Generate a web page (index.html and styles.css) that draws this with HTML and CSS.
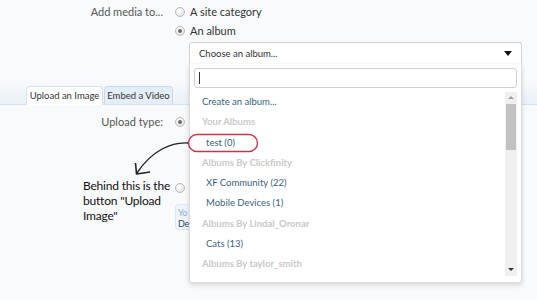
FILE: index.html
```html
<!DOCTYPE html>
<html>
<head>
<meta charset="utf-8">
<link rel="stylesheet" href="styles.css">
</head>
<body>
<div class="page">
  <div class="row">
    <div class="label">Add media to...</div>
    <div class="controls">
      <div class="opt"><span class="radio"></span><span>A site category</span></div>
      <div class="opt"><span class="radio checked"></span><span>An album</span></div>
      <div class="select">
        <div class="select-box"><span>Choose an album...</span><span class="caret"></span></div>
        <div class="dropdown">
          <div class="search"><span class="cursor"></span></div>
          <div class="listwrap">
            <ul class="list">
              <li class="item">Create an album...</li>
              <li class="head">Your Albums</li>
              <li class="item sub">test (0)</li>
              <li class="head">Albums By Clickfinity</li>
              <li class="item sub">XF Community (22)</li>
              <li class="item sub">Mobile Devices (1)</li>
              <li class="head">Albums By Lindal_Oronar</li>
              <li class="item sub">Cats (13)</li>
              <li class="head">Albums By taylor_smith</li>
            </ul>
            <div class="scrollbar">
              <span class="up"></span>
              <span class="thumb"></span>
              <span class="down"></span>
            </div>
          </div>
        </div>
      </div>
    </div>
  </div>

  <div class="tabs">
    <span class="tab active">Upload an Image</span>
    <span class="tab">Embed a Video</span>
  </div>

  <div class="row row2">
    <div class="label">Upload type:</div>
    <div class="controls">
      <div class="opt"><span class="radio checked"></span></div>
      <div class="spacer"></div>
      <div class="opt"><span class="radio"></span></div>
      <div class="info"><span class="info-a">Yo</span><span class="info-b">De</span></div>
    </div>
  </div>

  <div class="note">Behind this is the<br>button "Upload<br>Image"</div>
  <svg class="marks" width="537" height="300" viewBox="0 0 537 300">
    <rect x="188.5" y="134.5" width="69" height="17" rx="8.5" fill="none" stroke="#c5364f" stroke-width="1.4"/>
    <path d="M188 143 C172 142 152 150 137 173" fill="none" stroke="#222" stroke-width="1.4"/>
    <path d="M135.5 163 L136.5 174 L150 172" fill="none" stroke="#222" stroke-width="1.6" stroke-linejoin="round"/>
  </svg>
</div>
</body>
</html>
```

FILE: styles.css
```css
* { box-sizing: border-box; }
html, body { margin: 0; padding: 0; }
body {
  background: #f9fafc;
  font-family: Lato, "Open Sans", sans-serif;
  font-size: 11px;
  color: #333;
  width: 537px;
  height: 300px;
  overflow: hidden;
}
.page {
  position: relative;
  padding-top: 2px;
  height: 300px;
}
.row {
  display: grid;
  grid-template-columns: 163px 1fr;
  column-gap: 12px;
}
.label {
  text-align: right;
  color: #555;
  line-height: 19px;
}
.controls {
  display: flex;
  flex-direction: column;
}
.opt {
  display: flex;
  align-items: center;
  gap: 5px;
  height: 19px;
  color: #333;
}
.radio {
  width: 10px;
  height: 10px;
  border-radius: 50%;
  border: 1px solid #b9b9b9;
  background: radial-gradient(circle at 40% 35%, #ffffff, #dcdcdc);
  position: relative;
  flex: none;
}
.radio.checked::after {
  content: "";
  position: absolute;
  left: 2px;
  top: 2px;
  width: 4px;
  height: 4px;
  border-radius: 50%;
  background: #6b6b6b;
}
.select {
  position: relative;
  margin: 2px 0 0 14px;
  width: 333px;
  z-index: 5;
}
.select-box {
  height: 22px;
  border: 1px solid #d5d5d5;
  border-bottom: none;
  border-radius: 3px 3px 0 0;
  background: #fff;
  display: flex;
  align-items: center;
  justify-content: space-between;
  padding: 0 9px 0 9px;
  font-size: 9.5px;
  color: #333;
}
.caret {
  width: 0;
  height: 0;
  border-left: 4px solid transparent;
  border-right: 4px solid transparent;
  border-top: 5px solid #111;
}
.dropdown {
  position: absolute;
  left: 0;
  top: 22px;
  width: 333px;
  height: 219px;
  background: #fff;
  border: 1px solid #dcdcdc;
  border-top: none;
  border-radius: 0 0 3px 3px;
  box-shadow: 0 2px 5px rgba(0,0,0,0.15);
  padding: 4px 4px 6px 4px;
  display: flex;
  flex-direction: column;
}
.search {
  height: 20px;
  border: 1px solid #cfcfcf;
  border-radius: 3px;
  display: flex;
  align-items: center;
  padding-left: 4px;
}
.cursor {
  width: 1px;
  height: 12px;
  background: #333;
}
.listwrap {
  margin-top: 4px;
  display: flex;
  flex: 1;
}
.list {
  list-style: none;
  margin: 0;
  padding: 0 0 0 8px;
  flex: 1;
  font-size: 9.5px;
}
.list li {
  height: 20.3px;
  line-height: 20.3px;
  white-space: nowrap;
}
.item { color: #3a5f7d; }
.sub { padding-left: 4px; }
.head { color: #c9c9c9; font-weight: bold; }
.scrollbar {
  width: 12px;
  background: #f0f0f0;
  display: flex;
  flex-direction: column;
  align-items: center;
  padding-top: 4px;
}
.up, .down {
  width: 0;
  height: 0;
  border-left: 3px solid transparent;
  border-right: 3px solid transparent;
}
.up { border-bottom: 3px solid #a0a0a0; }
.down { border-top: 3px solid #333; margin-top: auto; margin-bottom: 5px; }
.thumb {
  width: 10px;
  height: 46px;
  background: #c2c2c2;
  margin-top: 5px;
}
.tabs {
  height: 41px;
  padding: 22px 0 0 26px;
  background: linear-gradient(to bottom, #f9fafc 0%, #f9fafc 40%, #eaf1f8 100%);
  border-bottom: 1px solid #d3e2f0;
  display: flex;
  align-items: flex-end;
  gap: 1px;
}
.tab {
  height: 18px;
  line-height: 17px;
  padding: 0;
  text-align: center;
  white-space: nowrap;
  font-size: 9.5px;
  color: #333;
  border: 1px solid #c9d9e9;
  border-bottom: none;
  border-radius: 4px 4px 0 0;
  background: #e4eef8;
  width: 69px;
}
.tab.active {
  background: #fff;
  width: 77px;
  height: 19px;
  line-height: 18px;
  margin-bottom: -1px;
  border-color: #d6e2ee;
}
.row2 { padding-top: 7px; }
.spacer { height: 47px; }
.info {
  margin-top: 7px;
  width: 14px;
  height: 26px;
  white-space: nowrap;
  background: #eef5fc;
  border: 1px solid #dbe7f3;
  border-right: none;
  border-radius: 4px 0 0 4px;
  padding: 2px 0 0 2px;
  display: flex;
  flex-direction: column;
  font-size: 9px;
  line-height: 11px;
  letter-spacing: -0.3px;
}
.info-a { color: #8fb0cc; }
.info-b { color: #2f4f6a; }
.note {
  position: absolute;
  left: 83px;
  top: 178px;
  font-family: Lato, "Open Sans", sans-serif;
  font-size: 12px;
  letter-spacing: -0.2px;
  line-height: 15px;
  color: #111;
}
.marks {
  position: absolute;
  left: 0;
  top: 0;
  pointer-events: none;
  z-index: 10;
}
```
